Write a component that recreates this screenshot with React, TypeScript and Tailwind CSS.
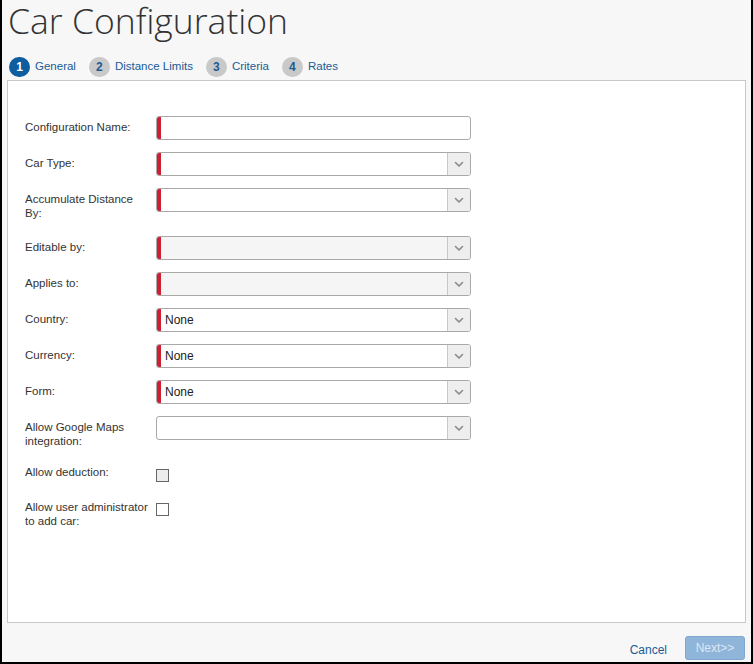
import React from "react";

const font = { fontFamily: '"Liberation Sans", Arial, sans-serif' };

function Chevron() {
  return (
    <svg width="10" height="7" viewBox="0 0 10 7" fill="none">
      <path d="M1.5 1.5 L5 5 L8.5 1.5" stroke="#8a8a8a" strokeWidth="1.6" strokeLinecap="round" strokeLinejoin="round" />
    </svg>
  );
}

function Field({ required = true, select = false, disabled = false, value = "" }: { required?: boolean; select?: boolean; disabled?: boolean; value?: string }) {
  return (
    <div
      className={`relative flex h-[24px] w-[315px] overflow-hidden rounded-[3px] border border-[#a9a9a9] ${disabled ? "bg-[#f5f5f5]" : "bg-white"}`}
    >
      {required && <div className="w-[4px] shrink-0 bg-[#d0202f]" />}
      <div className={`flex flex-1 items-center text-[12px] text-[#222] ${required ? "pl-[4px]" : "pl-[8px]"}`}>{value}</div>
      {select && (
        <div className="flex w-[23px] shrink-0 items-center justify-center border-l border-[#c8c8c8] bg-[#eeeeee]">
          <Chevron />
        </div>
      )}
    </div>
  );
}

function Row({ label, h, children, top = 0 }: { label: React.ReactNode; h: number; children: React.ReactNode; top?: number }) {
  return (
    <div className="flex" style={{ height: h }}>
      <div className="w-[131px] shrink-0 pt-[4px] pr-[2px] text-[11.5px] leading-[14px] text-[#333]">{label}</div>
      <div style={{ paddingTop: top }}>{children}</div>
    </div>
  );
}

function Checkbox({ gray = false }: { gray?: boolean }) {
  return <div className={`h-[13px] w-[13px] border border-[#666] ${gray ? "bg-[#ececec]" : "bg-white"}`} />;
}

function Tab({ n, label, active = false }: { n: number; label: string; active?: boolean }) {
  return (
    <div className="flex items-center">
      <div
        className={`flex h-[20px] w-[21px] items-center justify-center rounded-full text-[12px] font-bold ${active ? "bg-[#0e5d9f] text-white" : "bg-[#c9c9c9] text-[#1a5a96]"}`}
      >
        {n}
      </div>
      <span className="ml-[5px] text-[11.5px] text-[#1a5a96]">{label}</span>
    </div>
  );
}

export default function App() {
  return (
    <div className="h-[664px] w-[753px] overflow-hidden border-x-2 border-b-2 border-black bg-[#f7f7f7]" style={font}>
      <div className="flex h-full flex-col">
        <h1
          className="ml-[6px] mb-[11px] h-[40px] text-[35.5px] font-light leading-[40px] text-[#333]"
          style={{ fontFamily: '"Open Sans", sans-serif' }}
        >
          Car Configuration
        </h1>
        <div className="ml-[7px] flex h-[29px] items-start gap-[13px] pt-[6px]">
          <Tab n={1} label="General" active />
          <Tab n={2} label="Distance Limits" />
          <Tab n={3} label="Criteria" />
          <Tab n={4} label="Rates" />
        </div>
        <div className="ml-[5px] h-[543px] w-[739px] shrink-0 border border-[#c8c8c8] bg-white pl-[17px] pt-[35px]">
          <Row label="Configuration Name:" h={36}>
            <Field />
          </Row>
          <Row label="Car Type:" h={36}>
            <Field select />
          </Row>
          <Row label={<>Accumulate Distance<br />By:</>} h={48}>
            <Field select />
          </Row>
          <Row label="Editable by:" h={36}>
            <Field select disabled />
          </Row>
          <Row label="Applies to:" h={36}>
            <Field select disabled />
          </Row>
          <Row label="Country:" h={36}>
            <Field select value="None" />
          </Row>
          <Row label="Currency:" h={36}>
            <Field select value="None" />
          </Row>
          <Row label="Form:" h={36}>
            <Field select value="None" />
          </Row>
          <Row label={<>Allow Google Maps<br />integration:</>} h={45}>
            <Field select required={false} />
          </Row>
          <Row label="Allow deduction:" h={35} top={8}>
            <Checkbox gray />
          </Row>
          <Row label={<>Allow user administrator<br />to add car:</>} h={40} top={7}>
            <Checkbox />
          </Row>
        </div>
        <div className="flex items-center justify-end pr-[6px] pt-[13px]">
          <span className="mr-[18px] mt-[3px] text-[12px] text-[#1a5a96]">Cancel</span>
          <div className="flex h-[24px] w-[60px] items-center justify-center rounded-[3px] border border-[#7fa7d0] bg-[#90b5da] text-[12px] text-[#dce7f2]">
            Next&gt;&gt;
          </div>
        </div>
      </div>
    </div>
  );
}
